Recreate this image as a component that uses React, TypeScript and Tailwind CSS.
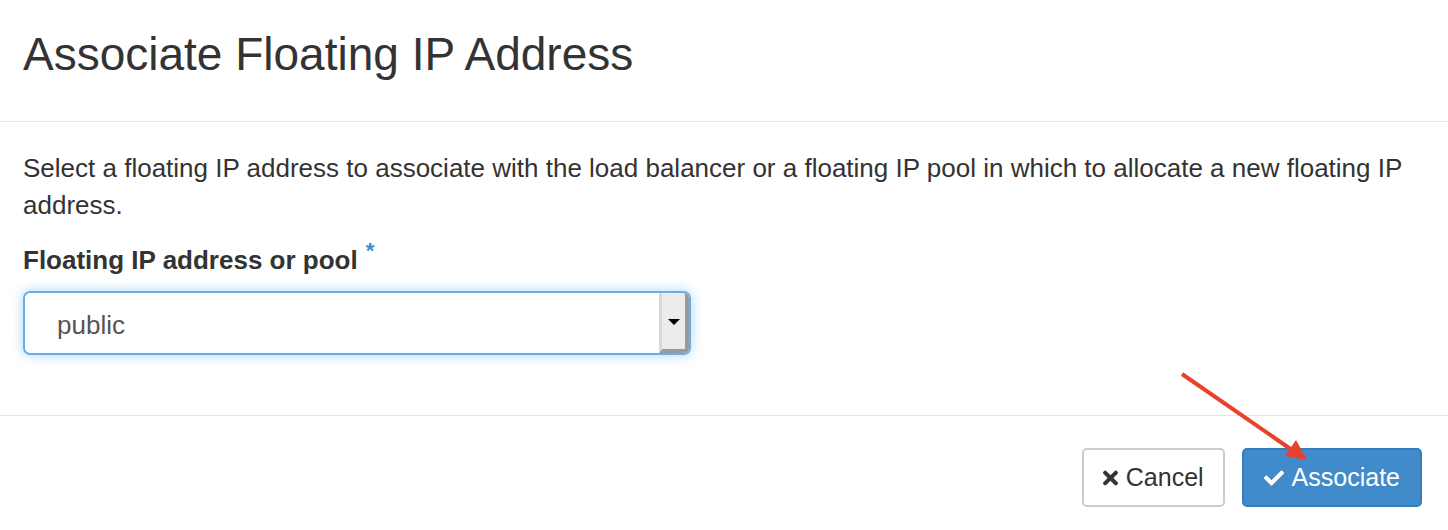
import { FaCheck, FaTimes } from "react-icons/fa";

export default function App() {
  return (
    <div className="relative h-[530px] w-[1448px] overflow-hidden bg-white font-['Liberation_Sans',Arial,sans-serif] text-[#333]">
      {/* header */}
      <div className="flex h-[122px] items-center border-b border-[#e5e5e5] px-[23px] pb-[14px]">
        <h3 className="text-[46px] leading-none">Associate Floating IP Address</h3>
      </div>

      {/* body */}
      <div className="px-[23px] pt-[28px]">
        <p className="text-[26px] leading-[37px]">
          Select a floating IP address to associate with the load balancer or a floating IP pool in which to allocate a new floating IP address.
        </p>

        <div className="mt-[18px]">
          <label className="flex items-start text-[26px] font-bold leading-[37px]">
            Floating IP address or pool
            <span className="ml-[8px] mt-[-10px] text-[22px] text-[#428bca]">*</span>
          </label>
          <div className="mt-[12px] flex h-[64px] w-[668px] items-center rounded-[7px] border-2 border-[#66afe9] pl-[32px] shadow-[0_0_12px_rgba(102,175,233,0.55)]">
            <span className="mt-[4px] flex-1 text-[26px] text-[#555]">public</span>
            <div className="flex h-[60px] w-[30px] items-center justify-center rounded-r-[5px] border-l-[3px] border-r-[4px] border-b-[4px] border-l-[#d9d9d9] border-r-[#9a9a9a] border-b-[#9a9a9a] bg-[#ececec]">
              <span className="mt-[2px] h-0 w-0 border-x-[6px] border-t-[6px] border-x-transparent border-t-black"></span>
            </div>
          </div>
        </div>
      </div>

      {/* footer */}
      <div className="mt-[60px] flex justify-end gap-[17px] border-t border-[#e5e5e5] px-[26px] pt-[32px]">
        <button className="flex h-[59px] items-center gap-[8px] rounded-[5px] border-2 border-[#ccc] bg-white px-[19px] text-[25px] text-[#333]">
          <FaTimes className="h-[22px] w-[15px]" />
          Cancel
        </button>
        <button className="flex h-[59px] items-center gap-[8px] rounded-[5px] border-2 border-[#357ebd] bg-[#428bca] px-[20px] text-[25px] text-white">
          <FaCheck className="h-[20px] w-[20px]" />
          Associate
        </button>
      </div>

      {/* annotation arrow */}
      <svg className="absolute left-0 top-0" width="1448" height="530">
        <line x1="1182" y1="374" x2="1292" y2="450" stroke="#e8412c" strokeWidth="4" />
        <polygon points="1307,460 1285,456 1296,440" fill="#e8412c" />
      </svg>
    </div>
  );
}
